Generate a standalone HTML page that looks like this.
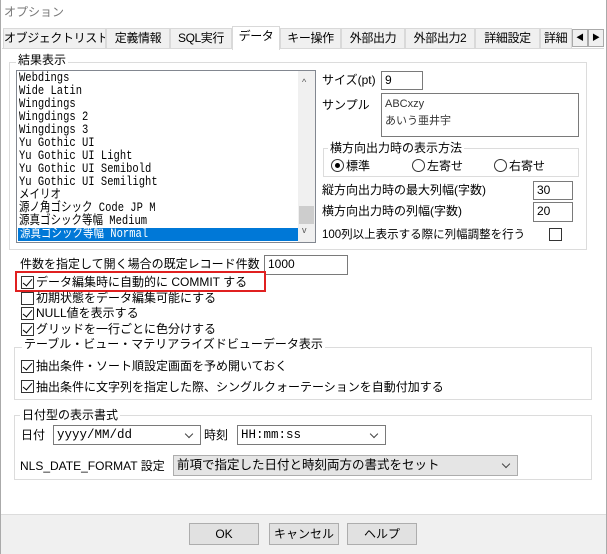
<!DOCTYPE html>
<html><head><meta charset="utf-8"><style>
*{box-sizing:border-box}
body{margin:0;width:607px;height:554px;position:relative;background:#fff;font-family:"Liberation Sans","Noto Sans CJK JP",sans-serif;font-size:12px;color:#000;overflow:hidden}
.a{position:absolute;white-space:nowrap;line-height:14px}
.box{position:absolute;border:1px solid #dcdcdc}
.lg{position:absolute;background:#fff;padding:0 2px;line-height:14px}
.in{position:absolute;border:1px solid #7a7a7a;background:#fff;padding-left:3px;line-height:17px}
.cb{position:absolute;width:13px;height:13px;border:1px solid #333;background:#fff}
.cb.on::after{content:"";position:absolute;left:3px;top:0px;width:4px;height:8px;border:solid #000;border-width:0 1.5px 1.5px 0;transform:rotate(40deg)}
.rd{position:absolute;width:13px;height:13px;border:1px solid #333;border-radius:50%;background:#fff}
.rd.on::after{content:"";position:absolute;left:3px;top:3px;width:5px;height:5px;border-radius:50%;background:#000}
.tab{position:absolute;top:28px;height:20px;background:#f0f0f0;border:1px solid #d9d9d9;border-bottom:none;text-align:center;line-height:19px;font-size:12px;letter-spacing:-0.4px;overflow:hidden;white-space:nowrap}
.mono{font-family:"Liberation Mono","Noto Sans CJK JP",monospace;font-size:12.5px;line-height:13px;transform:scaleX(0.84);transform-origin:left;white-space:nowrap}
.btn{position:absolute;top:523px;width:70px;height:22px;border:1px solid #adadad;background:#e1e1e1;text-align:center;line-height:20px}
.dd::after{content:"";position:absolute;right:8px;top:5px;width:5px;height:5px;border:solid #444;border-width:0 1px 1px 0;transform:rotate(45deg)}
</style></head><body>
<div style="position:absolute;left:0;top:0;width:1px;height:554px;background:#aaa"></div>
<div style="position:absolute;right:0;top:0;width:1px;height:554px;background:#aaa"></div>
<div class="a" style="left:4px;top:5px;color:#777;font-size:12px">オプション</div>
<div class="tab" style="left:3px;width:103px">オブジェクトリスト</div>
<div class="tab" style="left:106px;width:64px">定義情報</div>
<div class="tab" style="left:170px;width:62px">SQL実行</div>
<div class="tab" style="left:232px;top:26px;height:24px;width:48px;background:#fff;z-index:2">データ</div>
<div class="tab" style="left:280px;width:61px">キー操作</div>
<div class="tab" style="left:341px;width:64px">外部出力</div>
<div class="tab" style="left:405px;width:70px">外部出力2</div>
<div class="tab" style="left:475px;width:65px">詳細設定</div>
<div class="tab" style="left:540px;width:32px;text-align:left;padding-left:3px">詳細</div>
<div style="position:absolute;left:572px;top:29px;width:16px;height:18px;border:1px solid #aaa;background:#f0f0f0;font-size:8px;text-align:center;line-height:16px">◀</div>
<div style="position:absolute;left:588px;top:29px;width:16px;height:18px;border:1px solid #aaa;background:#f0f0f0;font-size:8px;text-align:center;line-height:16px">▶</div>
<div style="position:absolute;left:2px;top:48px;width:602px;height:1px;background:#d9d9d9"></div>

<div class="box" style="left:9px;top:62px;width:578px;height:188px"></div>
<div class="lg" style="left:16px;top:53px">結果表示</div>
<div style="position:absolute;left:16px;top:70px;width:300px;height:173px;border:1px solid #828790;background:#fff;overflow:hidden">
<div style="position:absolute;left:2px;top:1px">
<div class="mono">Webdings</div><div class="mono">Wide Latin</div><div class="mono">Wingdings</div><div class="mono">Wingdings 2</div><div class="mono">Wingdings 3</div><div class="mono">Yu Gothic UI</div><div class="mono">Yu Gothic UI Light</div><div class="mono">Yu Gothic UI Semibold</div><div class="mono">Yu Gothic UI Semilight</div><div class="mono">メイリオ</div><div class="mono">源ノ角ゴシック Code JP M</div><div class="mono">源真ゴシック等幅 Medium</div>
</div>
<div style="position:absolute;left:1px;top:157px;width:280px;height:13px;background:#0078d7"></div>
<div class="mono" style="position:absolute;left:3px;top:157px;color:#fff">源真ゴシック等幅 Normal</div>
<div style="position:absolute;left:281px;top:0;width:17px;height:171px;background:#f0f0f0"></div>
<div class="a" style="left:285px;top:4px;font-size:9px;color:#555">^</div>
<div class="a" style="left:285px;top:152px;font-size:9px;color:#555">v</div>
<div style="position:absolute;left:282px;top:135px;width:15px;height:18px;background:#cdcdcd"></div>
</div>

<div class="a" style="left:322px;top:73px">サイズ(pt)</div>
<div class="in" style="left:381px;top:71px;width:42px;height:19px">9</div>
<div class="a" style="left:322px;top:98px">サンプル</div>
<div style="position:absolute;left:381px;top:93px;width:198px;height:44px;border:1px solid #7a7a7a"></div>
<div class="a" style="left:385px;top:97px;font-size:11px;color:#333">ABCxzy</div>
<div class="a" style="left:385px;top:114px;font-size:11px;color:#333">あいう亜井宇</div>
<div class="box" style="left:323px;top:148px;width:256px;height:29px"></div>
<div class="lg" style="left:328px;top:141px">横方向出力時の表示方法</div>
<div class="rd on" style="left:331px;top:159px"></div><div class="a" style="left:346px;top:159px">標準</div>
<div class="rd" style="left:412px;top:159px"></div><div class="a" style="left:427px;top:159px">左寄せ</div>
<div class="rd" style="left:494px;top:159px"></div><div class="a" style="left:509px;top:159px">右寄せ</div>
<div class="a" style="left:322px;top:183px">縦方向出力時の最大列幅(字数)</div>
<div class="in" style="left:533px;top:181px;width:40px;height:19px">30</div>
<div class="a" style="left:322px;top:204px">横方向出力時の列幅(字数)</div>
<div class="in" style="left:533px;top:202px;width:40px;height:20px">20</div>
<div class="a" style="left:322px;top:228px;font-size:11.5px">100列以上表示する際に列幅調整を行う</div>
<div class="cb" style="left:549px;top:228px"></div>

<div class="a" style="left:20px;top:257px">件数を指定して開く場合の既定レコード件数</div>
<div class="in" style="left:264px;top:255px;width:84px;height:20px">1000</div>
<div style="position:absolute;left:15px;top:271px;width:251px;height:21px;border:2px solid #e02020"></div>
<div class="cb on" style="left:21px;top:276px"></div><div class="a" style="left:36px;top:275px">データ編集時に自動的に COMMIT する</div>
<div class="cb" style="left:21px;top:292px"></div><div class="a" style="left:36px;top:291px">初期状態をデータ編集可能にする</div>
<div class="cb on" style="left:21px;top:307px"></div><div class="a" style="left:36px;top:306px">NULL値を表示する</div>
<div class="cb on" style="left:21px;top:323px"></div><div class="a" style="left:36px;top:322px">グリッドを一行ごとに色分けする</div>

<div class="box" style="left:14px;top:347px;width:578px;height:53px"></div>
<div class="lg" style="left:22px;top:337px">テーブル・ビュー・マテリアライズドビューデータ表示</div>
<div class="cb on" style="left:21px;top:360px"></div><div class="a" style="left:36px;top:359px">抽出条件・ソート順設定画面を予め開いておく</div>
<div class="cb on" style="left:21px;top:380px"></div><div class="a" style="left:36px;top:380px">抽出条件に文字列を指定した際、シングルクォーテーションを自動付加する</div>

<div class="box" style="left:14px;top:415px;width:578px;height:65px"></div>
<div class="lg" style="left:20px;top:408px">日付型の表示書式</div>
<div class="a" style="left:21px;top:428px">日付</div>
<div class="in dd mono" style="left:53px;top:425px;width:148px;height:20px;transform:none;line-height:18px">yyyy/MM/dd</div>
<div class="a" style="left:204px;top:428px">時刻</div>
<div class="in dd mono" style="left:237px;top:425px;width:149px;height:20px;transform:none;line-height:18px">HH:mm:ss</div>
<div class="a" style="left:20px;top:459px">NLS_DATE_FORMAT 設定</div>
<div class="in dd" style="left:173px;top:455px;width:345px;height:21px;background:#e5e5e5;border-color:#adadad;line-height:19px;font-size:12.5px">前項で指定した日付と時刻両方の書式をセット</div>

<div style="position:absolute;left:1px;top:514px;width:605px;height:40px;background:#f0f0f0;border-top:1px solid #dcdcdc"></div>
<div class="btn" style="left:189px">OK</div>
<div class="btn" style="left:269px">キャンセル</div>
<div class="btn" style="left:347px">ヘルプ</div>
</body></html>
